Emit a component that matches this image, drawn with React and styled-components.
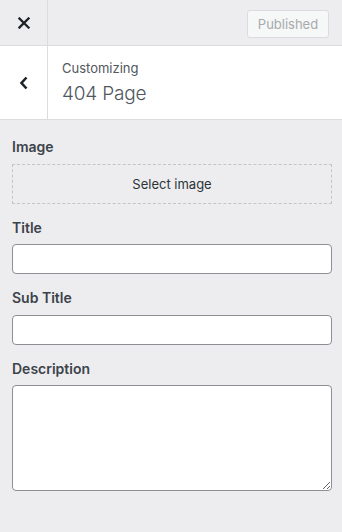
import React from "react";
import styled, { createGlobalStyle } from "styled-components";

const GlobalStyle = createGlobalStyle`
  html, body {
    margin: 0;
    padding: 0;
    background: #ededef;
  }
  body {
    font-family: Inter, "Liberation Sans", sans-serif;
    color: #3c434a;
  }
`;

const Sidebar = styled.div`
  width: 342px;
  min-height: 532px;
  background: #ededef;
`;

const TopBar = styled.div`
  display: flex;
  height: 45px;
  border-bottom: 1px solid #dcdcde;
  background: #ededef;
`;

const IconCell = styled.div`
  width: 47px;
  flex-shrink: 0;
  display: flex;
  align-items: center;
  justify-content: center;
  border-right: 1px solid #dcdcde;
  color: #1d2327;
`;

const TopActions = styled.div`
  flex: 1;
  display: flex;
  align-items: center;
  justify-content: flex-end;
  padding-right: 13px;
  padding-top: 2px;
`;

const PublishButton = styled.button`
  height: 28px;
  width: 82px;
  padding: 0;
  font-family: inherit;
  font-size: 13px;
  color: #a7aaad;
  background: #f6f7f7;
  border: 1px solid #dcdcde;
  border-radius: 3px;
`;

const SectionHead = styled.div`
  display: flex;
  height: 73px;
  background: #fff;
  border-bottom: 1px solid #dcdcde;
`;

const TitleBlock = styled.div`
  display: flex;
  flex-direction: column;
  justify-content: center;
  padding-left: 14px;
  padding-top: 1px;
`;

const Crumb = styled.span`
  font-size: 13px;
  line-height: 18px;
  color: #50575e;
`;

const SectionTitle = styled.h3`
  margin: 4px 0 0;
  font-size: 19px;
  letter-spacing: -0.2px;
  line-height: 26px;
  font-weight: 300;
  color: #50575e;
`;

const Controls = styled.div`
  padding: 15px 10px 20px 12px;
`;

const Control = styled.div`
  margin-bottom: 12px;
`;

const Label = styled.label`
  display: block;
  font-size: 14px;
  line-height: 24.5px;
  font-weight: 600;
  color: #3c434a;
  margin-bottom: 4px;
`;

const Placeholder = styled.button`
  display: block;
  width: 100%;
  height: 40px;
  box-sizing: border-box;
  background: transparent;
  border: 1px dashed #c3c4c7;
  border-radius: 0;
  font-family: inherit;
  font-size: 13px;
  color: #2c3338;
`;

const TextInput = styled.input`
  display: block;
  width: 100%;
  height: 30px;
  margin-top: 1px;
  box-sizing: border-box;
  border: 1px solid #8c8f94;
  border-radius: 4px;
  background: #fff;
  padding: 0 8px;
  font-family: inherit;
  font-size: 14px;
`;

const TextArea = styled.textarea`
  display: block;
  width: 100%;
  height: 106px;
  margin-top: 1px;
  box-sizing: border-box;
  border: 1px solid #8c8f94;
  border-radius: 4px;
  background: #fff;
  padding: 6px 8px;
  font-family: inherit;
  font-size: 14px;
`;

const CloseIcon = () => (
  <svg width="12" height="12" viewBox="0 0 12 12">
    <path d="M1.5 1.5 L10.5 10.5 M10.5 1.5 L1.5 10.5" stroke="currentColor" strokeWidth="2.3" strokeLinecap="square" />
  </svg>
);

const BackIcon = () => (
  <svg width="10" height="14" viewBox="0 0 10 14">
    <path d="M7.5 1.5 L2.5 7 L7.5 12.5" fill="none" stroke="currentColor" strokeWidth="2.6" />
  </svg>
);

export default function App() {
  return (
    <>
      <GlobalStyle />
      <Sidebar>
        <TopBar>
          <IconCell>
            <CloseIcon />
          </IconCell>
          <TopActions>
            <PublishButton disabled>Published</PublishButton>
          </TopActions>
        </TopBar>
        <SectionHead>
          <IconCell>
            <BackIcon />
          </IconCell>
          <TitleBlock>
            <Crumb>Customizing</Crumb>
            <SectionTitle>404 Page</SectionTitle>
          </TitleBlock>
        </SectionHead>
        <Controls>
          <Control>
            <Label>Image</Label>
            <Placeholder>Select image</Placeholder>
          </Control>
          <Control>
            <Label>Title</Label>
            <TextInput type="text" />
          </Control>
          <Control>
            <Label>Sub Title</Label>
            <TextInput type="text" />
          </Control>
          <Control>
            <Label>Description</Label>
            <TextArea />
          </Control>
        </Controls>
      </Sidebar>
    </>
  );
}
